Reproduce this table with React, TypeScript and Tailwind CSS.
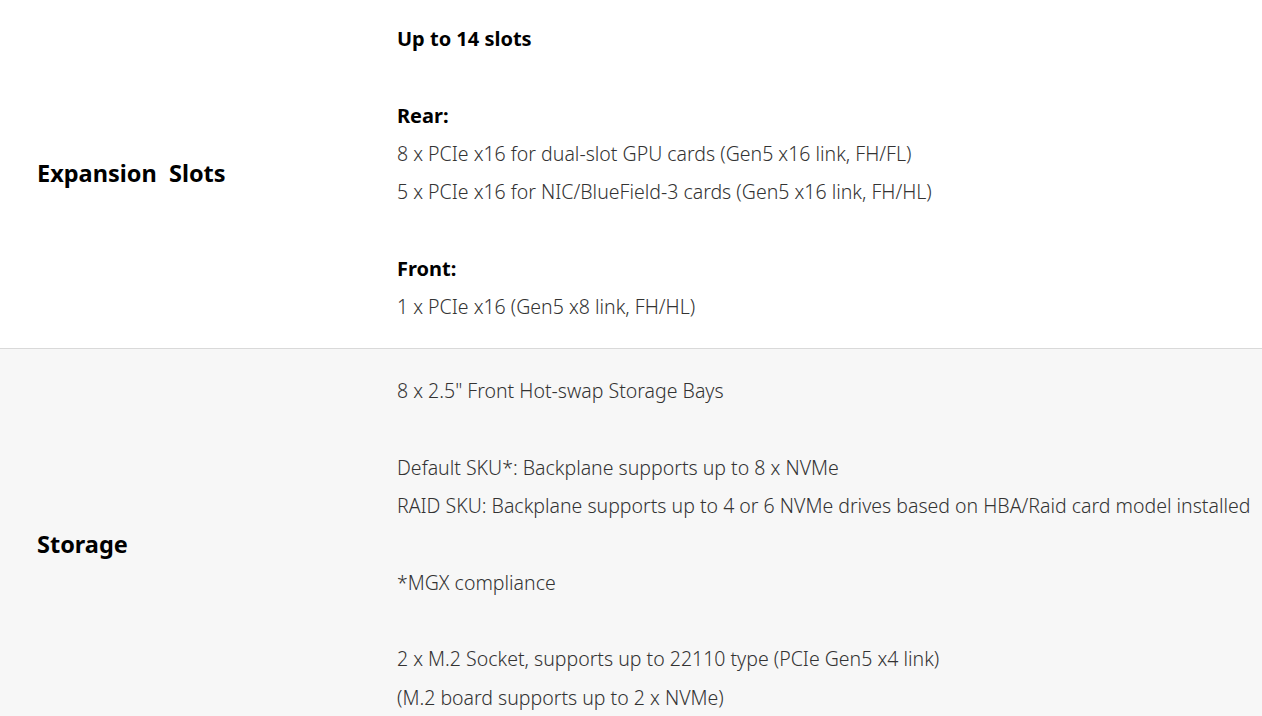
import React from "react";

const body = "font-['Noto_Sans',sans-serif]";

function Line({ children, bold }: { children?: React.ReactNode; bold?: boolean }) {
  return (
    <div className={bold ? "h-[38.3px] leading-[38.3px] font-bold text-[20px] text-black whitespace-nowrap" : "h-[38.3px] leading-[38.3px] font-light text-[19.5px] text-[#333] whitespace-nowrap"}>
      {children ?? "\u00a0"}
    </div>
  );
}

export default function App() {
  return (
    <div className={`${body} w-[1262px] h-[716px] overflow-hidden bg-white`}>
      <div className="flex bg-white pt-[20px] pb-[22px]">
        <div className="w-[397px] shrink-0 flex items-center pl-[37px]">
          <span className="text-[23.5px] font-bold text-black">Expansion&nbsp; Slots</span>
        </div>
        <div className="flex-1">
          <Line bold>Up to 14 slots</Line>
          <Line />
          <Line bold>Rear:</Line>
          <Line>8 x PCIe x16 for dual-slot GPU cards (Gen5 x16 link, FH/FL)</Line>
          <Line>5 x PCIe x16 for NIC/BlueField-3 cards (Gen5 x16 link, FH/HL)</Line>
          <Line />
          <Line bold>Front:</Line>
          <Line>1 x PCIe x16 (Gen5 x8 link, FH/HL)</Line>
        </div>
      </div>
      <div className="flex bg-[#f7f7f7] border-t border-[#d9d9d9] pt-[23px] pb-[22px]">
        <div className="w-[397px] shrink-0 flex items-center pl-[37px]">
          <span className="text-[23.5px] font-bold text-black">Storage</span>
        </div>
        <div className="flex-1">
          <Line>8 x 2.5" Front Hot-swap Storage Bays</Line>
          <Line />
          <Line>Default SKU*: Backplane supports up to 8 x NVMe</Line>
          <Line>RAID SKU: Backplane supports up to 4 or 6 NVMe drives based on HBA/Raid card model installed</Line>
          <Line />
          <Line>*MGX compliance</Line>
          <Line />
          <Line>2 x M.2 Socket, supports up to 22110 type (PCIe Gen5 x4 link)</Line>
          <Line>(M.2 board supports up to 2 x NVMe)</Line>
        </div>
      </div>
    </div>
  );
}
